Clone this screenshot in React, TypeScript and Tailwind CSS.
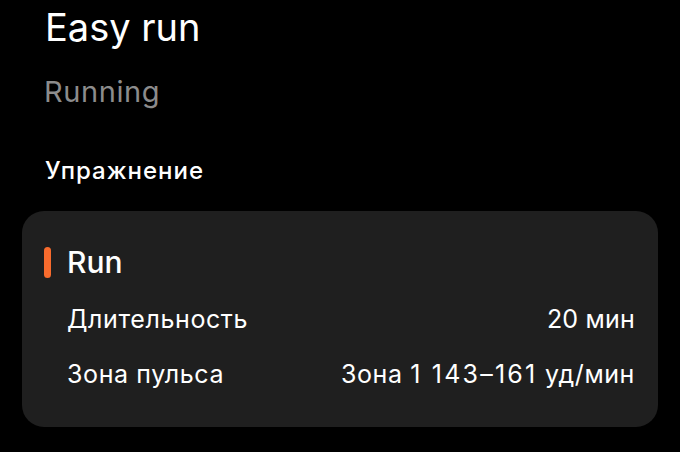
import React from "react";

export default function App() {
  return (
    <div
      className="w-[680px] h-[452px] bg-black text-white overflow-hidden"
      style={{ fontFamily: "Inter, Roboto, 'Noto Sans', sans-serif" }}
    >
      <div className="pt-[5px]">
        <div className="pl-[45px] text-[38px] leading-[44px] font-normal text-white">Easy run</div>
        <div className="pl-[44px] mt-[25px] text-[29px] leading-[36px] tracking-[0.6px] text-[#8c8c8c]">Running</div>
        <div className="pl-[45px] mt-[46px] text-[24px] leading-[30px] tracking-[1px] font-medium text-white">Упражнение</div>
      </div>
      <div className="mx-[22px] mt-[25px] h-[216px] rounded-[22px] bg-[#1f1f1f] pl-[22px] pr-[23px] pt-[35px]">
        <div className="flex items-center h-[32px]">
          <div className="w-[7px] h-[31px] rounded-full bg-[#f86b2d]" />
          <div className="ml-[16px] text-[30px] leading-[32px] font-medium text-white">Run</div>
        </div>
        <div className="flex items-center justify-between h-[30px] mt-[26px] pl-[23px] text-[25px] leading-[30px] tracking-[0.6px]">
          <span>Длительность</span>
          <span className="tracking-[0.2px]">20 мин</span>
        </div>
        <div className="flex items-center justify-between h-[30px] mt-[25px] pl-[23px] text-[25px] leading-[30px] tracking-[0.6px]">
          <span>Зона пульса</span>
          <span>
            Зона <span className="tracking-[2.2px]">1 143–161</span> уд/мин
          </span>
        </div>
      </div>
    </div>
  );
}
